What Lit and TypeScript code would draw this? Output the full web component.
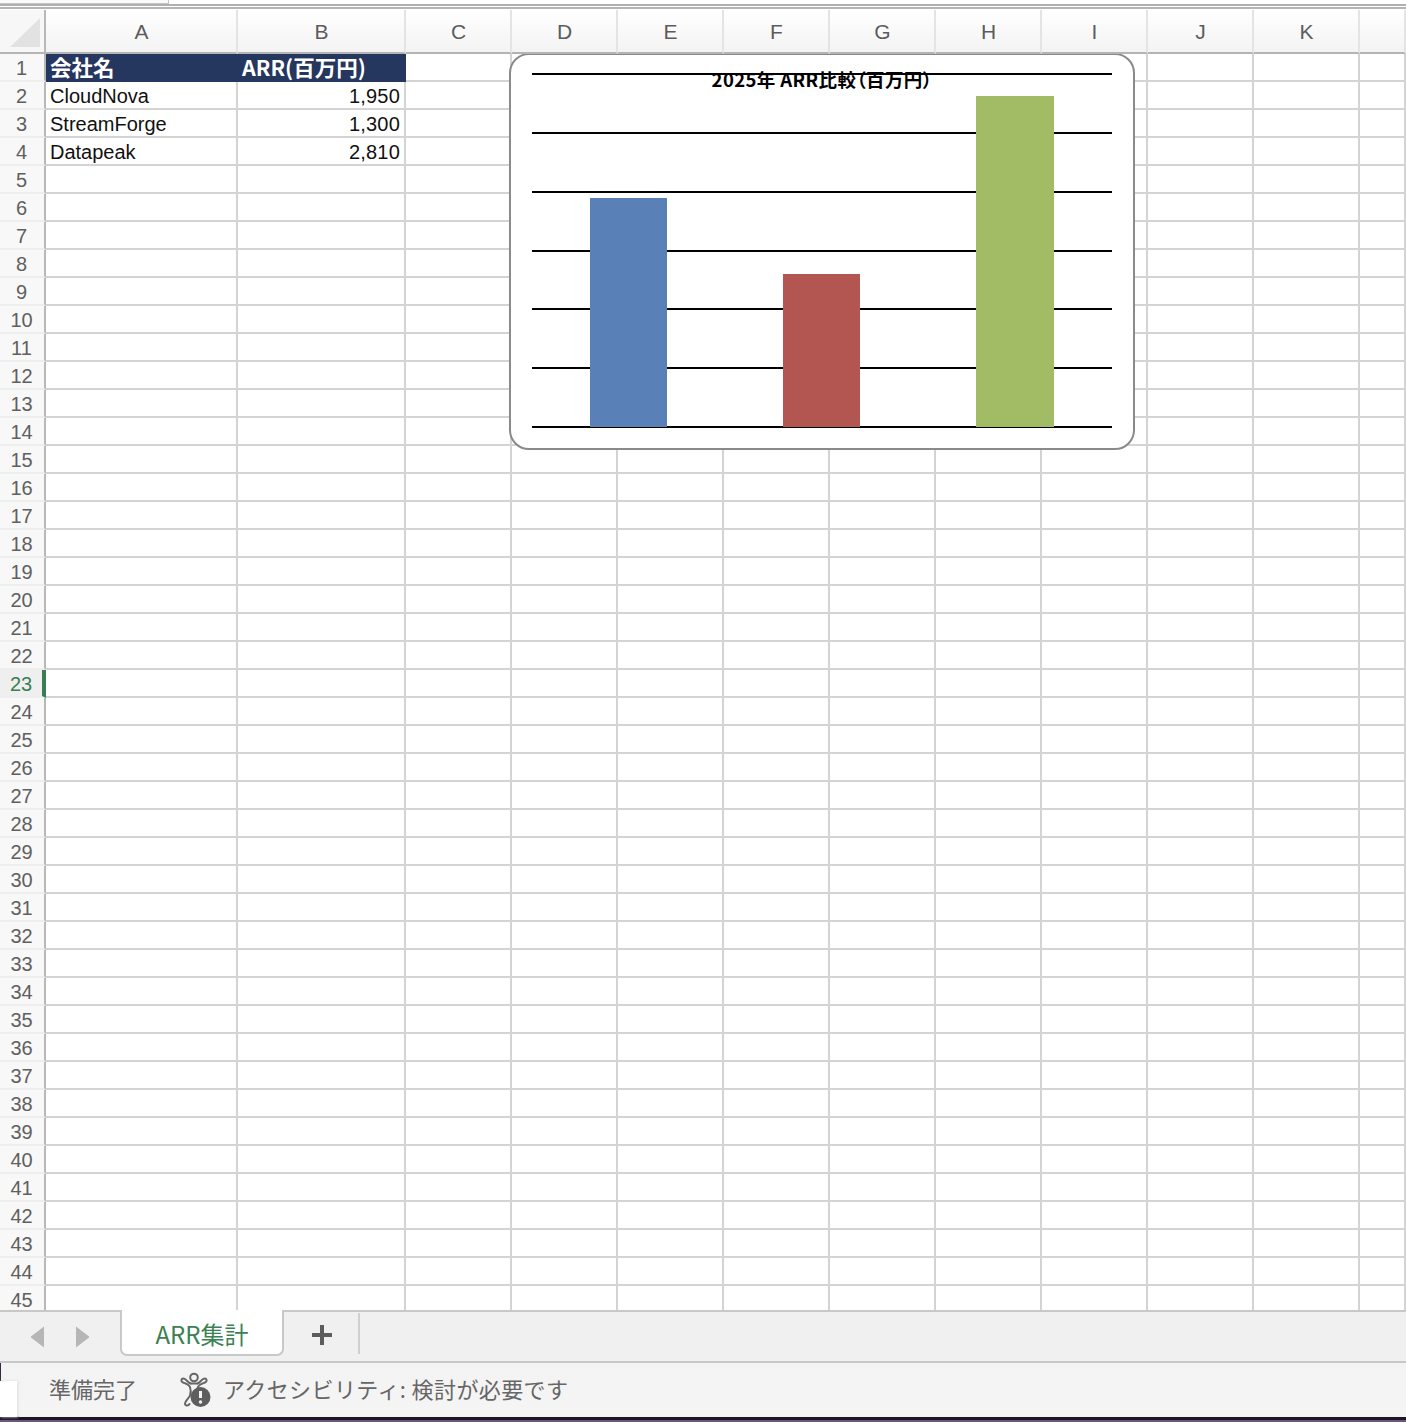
import { LitElement, html, css, svg } from "lit";
import { customElement } from "lit/decorators.js";

const COLS = ["A", "B", "C", "D", "E", "F", "G", "H", "I", "J", "K", ""];
const DATA = [
  { name: "CloudNova", arr: 1950, color: "#5a80b8", x: 79, w: 77 },
  { name: "StreamForge", arr: 1300, color: "#b35651", x: 272, w: 77 },
  { name: "Datapeak", arr: 2810, color: "#a2bb65", x: 465, w: 78 },
];
const TICK = 58.83;
const BASE = 372;

@customElement("app-root")
export class AppRoot extends LitElement {
  static styles = css`
    :host {
      display: flex;
      flex-direction: column;
      width: 1406px;
      height: 1422px;
      overflow: hidden;
      position: relative;
      background: #fff;
      font-family: "Liberation Sans", "Noto Sans CJK JP", sans-serif;
    }
    .top {
      height: 10px;
      flex: none;
      box-sizing: border-box;
      display: flex;
      flex-direction: column;
      background: #fff;
    }
    .top-box {
      width: 169px;
      height: 4px;
      box-sizing: border-box;
      background: #fafafa;
      border-right: 1px solid #c4c4c4;
      border-bottom: 1px solid #c4c4c4;
    }
    .top-l1 { height: 2px; background: #b0b0b0; }
    .top-l2 { height: 2px; margin-top: 1px; background: #b4b4b4; }
    .head {
      flex: none;
      display: grid;
      grid-template-columns: 46px 192px 168px repeat(9, 106px) 46px;
      height: 44px;
    }
    .corner {
      box-sizing: border-box;
      border-right: 2px solid #b8b8b8;
      border-bottom: 2px solid #b4b4b4;
      background: #f7f7f7;
      display: flex;
      align-items: flex-end;
      justify-content: flex-end;
      padding: 0 4px 5px 0;
    }
    .corner svg { display: block; }
    .col {
      box-sizing: border-box;
      border-right: 2px solid #e4e4e4;
      border-bottom: 2px solid #b4b4b4;
      background: linear-gradient(#fff, #f3f3f3);
      color: #5c5c5c;
      font-size: 21px;
      display: flex;
      align-items: center;
      justify-content: center;
      padding: 2px 0 0 1px;
    }
    .body {
      flex: none;
      height: 1256px;
      overflow: hidden;
      position: relative;
      display: grid;
      grid-template-columns: 46px 192px 168px repeat(9, 106px) 46px;
      grid-auto-rows: 28px;
    }
    .rh {
      box-sizing: border-box;
      border-right: 2px solid #b8b8b8;
      border-bottom: 2px solid #eeeeee;
      background: #f8f8f8;
      color: #606060;
      font-size: 20px;
      line-height: 28px;
      text-align: center;
      padding-right: 1px;
      white-space: nowrap;
    }
    .rh.sel {
      color: #3b7d53;
      background: #efefef;
      border-right-color: #3b7d53;
      border-right-width: 4px;
      padding-right: 0;
    }
    .c {
      box-sizing: border-box;
      border-right: 2px solid #d4d4d4;
      border-bottom: 2px solid #d4d4d4;
      font-size: 20px;
      line-height: 29px;
      color: #111;
      padding: 0 4px;
      white-space: nowrap;
    }
    .c.num { text-align: right; letter-spacing: 0.2px; }
    .c.h {
      border: 0;
      background: #25365f;
      color: #fff;
      font-family: "Noto Sans CJK JP", sans-serif;
      font-weight: 700;
      font-size: 21.500px;
      line-height: 26px;
    }
    .chart {
      position: absolute;
      left: 509px;
      top: -1px;
      width: 626px;
      height: 397px;
      box-sizing: border-box;
      background: #fff;
      border: 2px solid #8a8a8a;
      border-radius: 20px;
    }
    .chart svg { display: block; }
    .title {
      position: absolute;
      left: 0;
      right: 0;
      top: 11px;
      text-align: center;
      font-family: "Noto Sans CJK JP", sans-serif;
      font-size: 18.500px;
      line-height: 26px;
      font-weight: 700;
      color: #000;
      font-feature-settings: "palt";
      letter-spacing: 0.4px;
    }
    .tabs {
      flex: none;
      height: 53px;
      box-sizing: border-box;
      border-top: 2px solid #c8c8c8;
      border-bottom: 2px solid #c8c8c8;
      background: #f0f0f0;
      display: flex;
      align-items: flex-start;
    }
    .nav {
      width: 120px;
      height: 49px;
      display: flex;
      align-items: center;
      gap: 32px;
      padding-left: 30px;
      box-sizing: border-box;
    }
    .nav svg { display: block; }
    .tab {
      width: 164px;
      height: 46px;
      margin-top: -2px;
      box-sizing: border-box;
      background: #fff;
      border: 2px solid #c8c8c8;
      border-top: 0;
      border-radius: 0 0 7px 7px;
      color: #3c8154;
      font-family: "Noto Sans CJK JP", sans-serif;
      font-size: 24px;
      line-height: 48px;
      text-align: center;
    }
    .plus {
      width: 76px;
      box-sizing: border-box;
      border-right: 2px solid #d0d0d0;
      height: 41px;
      margin-top: 1px;
      padding-left: 2px;
      display: flex;
      align-items: center;
      justify-content: center;
      padding-top: 2px;
    }
    .status {
      flex: 1;
      position: relative;
      background: linear-gradient(#f3f3f3, #f5f5f5);
      display: flex;
      align-items: center;
      padding: 0 0 9px 49px;
      color: #666;
      font-family: "Noto Sans CJK JP", sans-serif;
      font-size: 22px;
    }
    .st1 { width: 131px; }
    .st-icon { display: block; width: 32px; height: 36px; margin: 4px 11px 0 0; flex: none; }
    .st2 { letter-spacing: 0.400px; }
    .edge {
      position: absolute;
      left: 0;
      right: 0;
      bottom: 0;
      height: 5px;
      background: linear-gradient(#1f1428 60%, #6a5878 60%);
    }
    .corner-dark {
      position: absolute;
      left: 0;
      bottom: 0;
      width: 46px;
      height: 12px;
    }
    .corner-dark svg { display: block; }
    .left-edge {
      position: absolute;
      left: 0;
      top: 0;
      width: 1px;
      height: 18px;
      background: #3a2646;
    }
    .white {
      position: absolute;
      left: 0;
      bottom: 5px;
      width: 17px;
      height: 36px;
      background: #fff;
      box-shadow: 1px 0 3px #ddd;
    }
  `;

  private chart() {
    const lines = [0, 1, 2, 3, 4, 5, 6].map((i) => {
      const y = Math.round(BASE - i * TICK);
      return svg`<line x1="21" x2="601" y1=${y} y2=${y} stroke="#000" stroke-width="1.8"></line>`;
    });
    const bars = DATA.map((d) => {
      const h = Math.round((d.arr / 500) * TICK);
      return svg`<rect x=${d.x} y=${BASE - h} width=${d.w} height=${h} fill=${d.color}></rect>`;
    });
    return html`<div class="chart">
      <svg width="622" height="393" viewBox="0 0 622 393">${lines}${bars}</svg>
      <div class="title">2025年 ARR比較（百万円）</div>
    </div>`;
  }

  render() {
    const rows = [];
    for (let r = 1; r <= 45; r++) {
      rows.push(html`<div class="rh ${r === 23 ? "sel" : ""}">${r}</div>`);
      for (let c = 0; c < 12; c++) {
        if (r === 1 && c === 0) rows.push(html`<div class="c h">会社名</div>`);
        else if (r === 1 && c === 1) rows.push(html`<div class="c h">ARR(百万円)</div>`);
        else if (r >= 2 && r <= 4 && c === 0) rows.push(html`<div class="c">${DATA[r - 2].name}</div>`);
        else if (r >= 2 && r <= 4 && c === 1)
          rows.push(html`<div class="c num">${DATA[r - 2].arr.toLocaleString("en-US")}</div>`);
        else rows.push(html`<div class="c"></div>`);
      }
    }
    return html`
      <div class="top">
        <div class="top-box"></div>
        <div class="top-l1"></div>
        <div class="top-l2"></div>
      </div>
      <div class="head">
        <div class="corner">
          <svg width="30" height="29" viewBox="0 0 30 29"><path d="M30 0V29H0Z" fill="#e2e2e2"></path></svg>
        </div>
        ${COLS.map((c) => html`<div class="col">${c}</div>`)}
      </div>
      <div class="body">${rows}${this.chart()}</div>
      <div class="tabs">
        <div class="nav">
          <svg width="14" height="22" viewBox="0 0 14 22"><path d="M14 1V21L1 11Z" fill="#b6b6b6" stroke="#b6b6b6" stroke-linejoin="round"></path></svg>
          <svg width="14" height="22" viewBox="0 0 14 22"><path d="M0 1V21L13 11Z" fill="#b6b6b6" stroke="#b6b6b6" stroke-linejoin="round"></path></svg>
        </div>
        <div class="tab">ARR集計</div>
        <div class="plus">
          <svg width="20" height="20" viewBox="0 0 20 20"><path d="M8 0h4v8h8v4h-8v8H8v-8H0V8h8Z" fill="#5c5c5c"></path></svg>
        </div>
      </div>
      <div class="status">
        <div class="left-edge"></div>
        <span class="st1">準備完了</span>
        <svg class="st-icon" viewBox="0 0 32 36" fill="none" stroke="#666" stroke-width="2" stroke-linecap="round" stroke-linejoin="round">
          <circle cx="14" cy="5.500" r="3.800"></circle>
          <path d="M10.500 11.500C8 11 6 6.500 3.500 6.500C1 6.500 .5 9.500 3 10.500C5.500 11.500 9 12.500 10 15C11 18 11 21 10 23.500C9 26 5 29 5 31.500C5 34 8.500 34 9.500 32"></path>
          <path d="M17.500 11.500C20 11 22 6.500 24.500 6.500C27 6.500 27.500 9.500 25 10.500C22.500 11.500 19 12.500 18 15L17.500 17"></path>
          <path d="M10.500 11.500H17.500"></path>
          <circle cx="20.500" cy="25" r="10" fill="#5e5e5e" stroke="none"></circle>
          <path d="M20.500 19V26" stroke="#f4f4f4" stroke-width="3" stroke-linecap="butt"></path>
          <circle cx="20.500" cy="30" r="1.700" fill="#f4f4f4" stroke="none"></circle>
        </svg>
        <span class="st2">アクセシビリティ: 検討が必要です</span>
        <div class="corner-dark">
          <svg width="46" height="12" viewBox="0 0 46 12"><path d="M0 0C6 6 18 8 46 8V12H0Z" fill="#20132a"></path></svg>
        </div>
        <div class="edge"></div>
        <div class="white"></div>
      </div>
    `;
  }
}
